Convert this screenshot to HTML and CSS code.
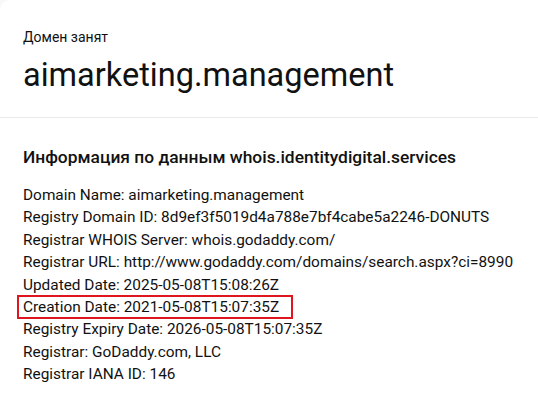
FILE: index.html
```html
<!DOCTYPE html>
<html lang="ru">
<head>
<meta charset="utf-8">
<title>Домен занят</title>
<link rel="stylesheet" href="styles.css">
</head>
<body>
<div class="card">
  <section class="head">
    <div class="status">Домен занят</div>
    <h1 class="domain">aimarketing.management</h1>
  </section>
  <section class="whois">
    <h2 class="whois-title">Информация по данным whois.identitydigital.services</h2>
    <div class="lines">
      <div class="line">Domain Name: aimarketing.management</div>
      <div class="line">Registry Domain ID: 8d9ef3f5019d4a788e7bf4cabe5a2246-DONUTS</div>
      <div class="line">Registrar WHOIS Server: whois.godaddy.com/</div>
      <div class="line">Registrar URL: http://www.godaddy.com/domains/search.aspx?ci=8990</div>
      <div class="line">Updated Date: 2025-05-08T15:08:26Z</div>
      <div class="line"><span class="mark">Creation Date: 2021-05-08T15:07:35Z</span></div>
      <div class="line">Registry Expiry Date: 2026-05-08T15:07:35Z</div>
      <div class="line">Registrar: GoDaddy.com, LLC</div>
      <div class="line">Registrar IANA ID: 146</div>
    </div>
  </section>
</div>
</body>
</html>
```
FILE: styles.css
```css
html, body {
  margin: 0;
  padding: 0;
  background: #f7f9f9;
  overflow: hidden;
}
body {
  font-family: Roboto, "Noto Sans", sans-serif;
  color: #111;
}
.card {
  width: 538px;
  height: 395px;
  background: #fff;
  border-top-left-radius: 10px;
  overflow: hidden;
}
.head {
  padding: 28px 23px 0;
  height: 89px;
  border-bottom: 1px solid #e6ecec;
}
.status {
  font-size: 14px;
  line-height: 18px;
}
.domain {
  margin: 10px 0 0;
  font-size: 32.5px;
  font-weight: 400;
  line-height: 38px;
}
.whois {
  padding: 28px 23px 0;
}
.whois-title {
  margin: 0 0 16px;
  font-size: 17.4px;
  font-weight: 500;
  line-height: 22px;
}
.line {
  font-size: 15.4px;
  line-height: 22.4px;
  white-space: nowrap;
}
.mark {
  margin-left: -6px;
  padding: 1px 12px 1px 4px;
  border: 2px solid #e0161e;
}
```
